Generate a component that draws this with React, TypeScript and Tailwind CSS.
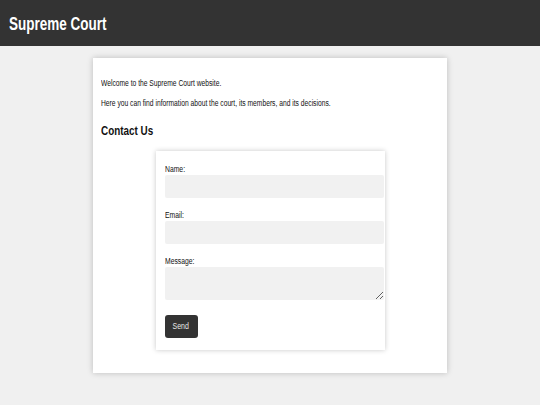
import React from 'react';

// the reference uses a condensed face; no condensed font is installed, so text is narrowed with scale-x
export default function App() {
  return (
    <div className="min-h-screen bg-[#f0f0f0] font-['Liberation_Sans',Arial,sans-serif] text-[#111]">
      <header className="h-[46px] bg-[#333] px-[9px] flex items-center">
        <h1 className="text-white font-bold text-[19px] leading-none origin-left scale-x-[0.71]">Supreme Court</h1>
      </header>

      <main className="mx-auto mt-[12px] w-[354px] bg-white px-[8px] pt-[20px] pb-[23px] shadow-[0_0_6px_rgba(0,0,0,0.22)]">
        <p className="text-[9.2px] leading-[11px] origin-left scale-x-[0.73] whitespace-nowrap">
          Welcome to the Supreme Court website.
        </p>
        <p className="mt-[9px] text-[9.2px] leading-[11px] origin-left scale-x-[0.73] whitespace-nowrap">
          Here you can find information about the court, its members, and its decisions.
        </p>
        <h2 className="mt-[14px] text-[13px] leading-[15px] font-bold origin-left scale-x-[0.76]">Contact Us</h2>

        <form
          className="mx-auto mt-[13px] w-[229px] bg-white pl-[9px] pt-[13px] pb-[12px] shadow-[0_0_5px_rgba(0,0,0,0.22)]"
          onSubmit={(e) => e.preventDefault()}
        >
          <label className="block text-[9.2px] leading-[11px] origin-left scale-x-[0.74]">Name:</label>
          <input type="text" className="block w-[219px] h-[23px] bg-[#f1f1f1] rounded-[2px] outline-none" />

          <label className="block mt-[12px] text-[9.2px] leading-[11px] origin-left scale-x-[0.74]">Email:</label>
          <input type="email" className="block w-[219px] h-[23px] bg-[#f1f1f1] rounded-[2px] outline-none" />

          <label className="block mt-[12px] text-[9.2px] leading-[11px] origin-left scale-x-[0.74]">Message:</label>
          <textarea className="block w-[219px] h-[33px] bg-[#f1f1f1] rounded-[2px] outline-none" />

          <button
            type="submit"
            className="mt-[15px] w-[33px] h-[23px] bg-[#333] text-[#e8e8e8] rounded-[3px] flex items-center justify-center"
          >
            <span className="text-[9.2px] leading-none scale-x-[0.76]">Send</span>
          </button>
        </form>
      </main>
    </div>
  );
}
